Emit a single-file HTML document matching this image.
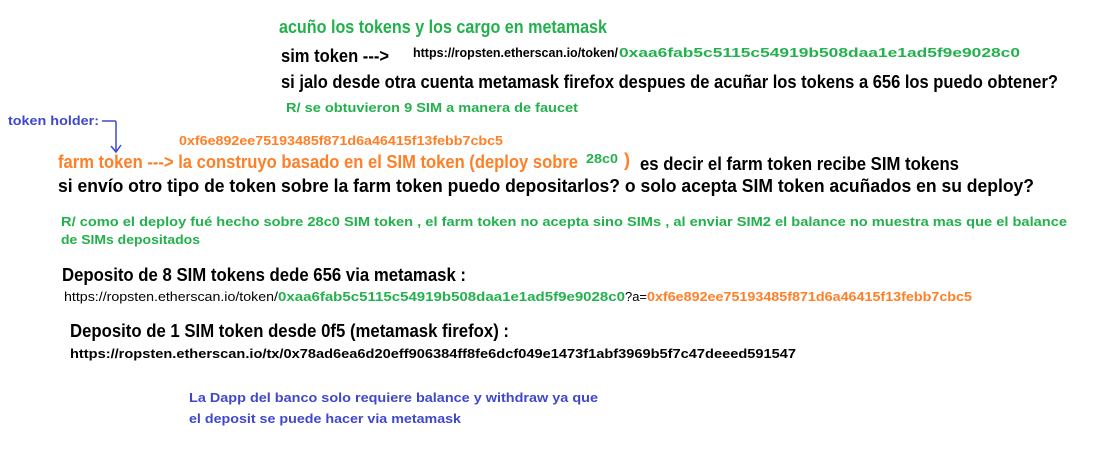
<!DOCTYPE html>
<html><head><meta charset="utf-8"><style>
html,body{margin:0;padding:0;background:#fff;}
svg{display:block;}
text{font-family:"Liberation Sans",sans-serif;font-weight:bold;}
.b{font-size:18px;}
.s{font-size:13px;}
.g{fill:#22b14c}.o{fill:#ff7f27}.k{fill:#000}.u{fill:#3f48cc}
</style></head><body>
<svg width="1118" height="449" viewBox="0 0 1118 449" xmlns="http://www.w3.org/2000/svg">
<rect width="1118" height="449" fill="#fff"/>
<text class="b g" x="279" y="33" textLength="328" lengthAdjust="spacingAndGlyphs">acuño los tokens y los cargo en metamask</text>
<text class="b k" x="281" y="62" textLength="108" lengthAdjust="spacingAndGlyphs">sim token ---&gt;</text>
<text class="s k" x="413" y="57" textLength="205" lengthAdjust="spacingAndGlyphs">https://ropsten.etherscan.io/token/</text>
<text class="s g" x="619" y="57" textLength="401" lengthAdjust="spacingAndGlyphs">0xaa6fab5c5115c54919b508daa1e1ad5f9e9028c0</text>
<text class="b k" x="281" y="88" textLength="777" lengthAdjust="spacingAndGlyphs">si jalo desde otra cuenta metamask firefox despues de acuñar los tokens a 656 los puedo obtener?</text>
<text class="s g" x="286" y="112" textLength="292" lengthAdjust="spacingAndGlyphs">R/ se obtuvieron 9 SIM a manera de faucet</text>
<text class="s u" x="8" y="125" textLength="91" lengthAdjust="spacingAndGlyphs">token holder:</text>
<path d="M82 121 H95 Q96 121 96 123 V151 M91 146 L96 152 L101 145" transform="translate(20,0)" stroke="#3f48cc" stroke-width="1.5" fill="none"/>
<text class="s o" x="179" y="145" textLength="324" lengthAdjust="spacingAndGlyphs">0xf6e892ee75193485f871d6a46415f13febb7cbc5</text>
<text class="b o" x="58" y="168" textLength="520" lengthAdjust="spacingAndGlyphs">farm token ---&gt; la construyo basado en el SIM token (deploy sobre</text>
<text class="s g" x="586" y="163" textLength="32" lengthAdjust="spacingAndGlyphs">28c0</text>
<text class="b o" x="624" y="166">)</text>
<text class="b k" x="640" y="170" textLength="319" lengthAdjust="spacingAndGlyphs">es decir el farm token recibe SIM tokens</text>
<text class="b k" x="58" y="192" textLength="976" lengthAdjust="spacingAndGlyphs">si envío otro tipo de token sobre la farm token puedo depositarlos? o solo acepta SIM token acuñados en su deploy?</text>
<text class="s g" x="61" y="226" textLength="1006" lengthAdjust="spacingAndGlyphs">R/ como el deploy fué hecho sobre 28c0 SIM token , el farm token no acepta sino SIMs , al enviar SIM2 el balance no muestra mas que el balance</text>
<text class="s g" x="61" y="244" textLength="139" lengthAdjust="spacingAndGlyphs">de SIMs depositados</text>
<text class="b k" x="62" y="281" textLength="404" lengthAdjust="spacingAndGlyphs">Deposito de 8 SIM tokens dede 656 via metamask :</text>
<text class="s k" x="64" y="301" style="font-weight:normal" textLength="214" lengthAdjust="spacingAndGlyphs">https://ropsten.etherscan.io/token/</text>
<text class="s g" x="278" y="301" textLength="347" lengthAdjust="spacingAndGlyphs">0xaa6fab5c5115c54919b508daa1e1ad5f9e9028c0</text>
<text class="s k" x="625" y="301" style="font-weight:normal" textLength="22" lengthAdjust="spacingAndGlyphs">?a=</text>
<text class="s o" x="647" y="301" textLength="325" lengthAdjust="spacingAndGlyphs">0xf6e892ee75193485f871d6a46415f13febb7cbc5</text>
<text class="b k" x="70" y="337" textLength="439" lengthAdjust="spacingAndGlyphs">Deposito de 1 SIM token desde 0f5 (metamask firefox) :</text>
<text class="s k" x="70" y="358" textLength="726" lengthAdjust="spacingAndGlyphs">https://ropsten.etherscan.io/tx/0x78ad6ea6d20eff906384ff8fe6dcf049e1473f1abf3969b5f7c47deeed591547</text>
<text class="s u" x="189" y="402" textLength="409" lengthAdjust="spacingAndGlyphs">La Dapp del banco solo requiere balance y withdraw ya que</text>
<text class="s u" x="189" y="423" textLength="272" lengthAdjust="spacingAndGlyphs">el deposit se puede hacer via metamask</text>
</svg>
</body></html>
